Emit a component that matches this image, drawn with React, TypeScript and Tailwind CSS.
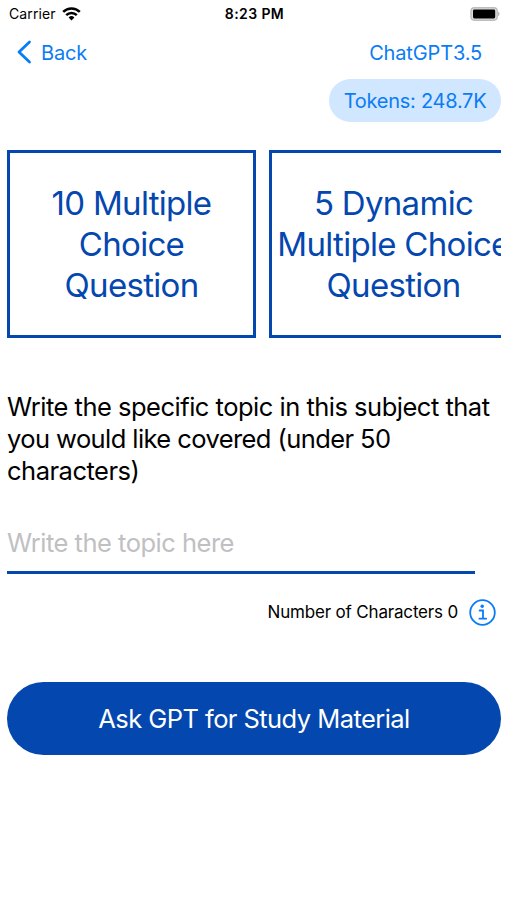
import React from 'react';

const StatusBar: React.FC = () => (
  <div className="grid h-[27px] grid-cols-3 items-center pl-[9px] pr-[7px]">
    <div className="flex items-center gap-1.5">
      <span className="text-[14px] tracking-[0.1px]">Carrier</span>
      <svg width="19" height="14" viewBox="0 0 19 14" fill="none" stroke="#000" strokeWidth="2.5">
        <path d="M1.2 4.9a11.7 11.7 0 0 1 16.6 0" />
        <path d="M4.2 8.2a7.5 7.5 0 0 1 10.6 0" />
        <path d="M9.5 13.4 6.6 10.5a4.1 4.1 0 0 1 5.8 0z" fill="#000" stroke="none" />
      </svg>
    </div>
    <span className="text-center text-[14px] font-semibold tracking-[0.4px]">8:23 PM</span>
    <svg className="justify-self-end" width="30" height="14" viewBox="0 0 30 14">
      <rect x="1" y="0.8" width="26.2" height="12.4" rx="3.4" fill="#ddd" stroke="#bdbdbd" strokeWidth="1.4" />
      <rect x="3" y="2.6" width="22.2" height="8.8" rx="1.4" fill="#000" />
      <path d="M28.2 4.6c1.8.8 1.8 3.8 0 4.6z" fill="#b0b0b0" />
    </svg>
  </div>
);

const NavBar: React.FC = () => (
  <div className="flex h-[50px] items-center justify-between pl-4 pr-[25px] text-[20px] tracking-[-0.2px] text-[#0a7cf5]">
    <button className="flex items-center gap-[9px]">
      <svg width="16" height="24" viewBox="0 0 16 24" fill="none" stroke="currentColor" strokeWidth="2.8" strokeLinecap="round" strokeLinejoin="round">
        <path d="M13.5 2 3 12l10.5 10" />
      </svg>
      <span className="pt-0.5">Back</span>
    </button>
    <span className="pt-0.5 tracking-[-0.15px]">ChatGPT3.5</span>
  </div>
);

const options = [
  ['10 Multiple', 'Choice', 'Question'],
  ['5 Dynamic', 'Multiple Choice', 'Question'],
];

const App: React.FC = () => {
  return (
    <div className="h-[900px] w-[507px] overflow-hidden bg-white font-['Inter',sans-serif] text-black">
      <StatusBar />
      <NavBar />
      <div className="flex justify-end pr-[6px] pt-0.5">
        <span className="flex h-[43px] w-[172px] items-center justify-center rounded-full bg-[#d1e6ff] text-[20px] tracking-[-0.25px] text-[#0a7cf5]">
          Tokens: 248.7K
        </span>
      </div>

      <div className="ml-[7px] mr-[6px] mt-7 flex gap-[13px] overflow-hidden">
        {options.map((lines) => (
          <div
            key={lines[0]}
            className="flex h-[188px] w-[249px] shrink-0 flex-col items-center justify-center border-[3px] border-[#0447ae] pt-px text-[33px] leading-[41px] tracking-[-0.7px] whitespace-nowrap text-[#0447ae]"
          >
            {lines.map((line) => (
              <span key={line}>{line}</span>
            ))}
          </div>
        ))}
      </div>

      <div className="ml-[7px] mr-[6px] mt-[53px]">
        <p className="text-[25.5px] leading-8 tracking-[-0.5px] whitespace-nowrap">
          Write the specific topic in this subject that
          <br />
          <span className="tracking-[-0.58px]">you would like covered (under 50</span>
          <br />
          characters)
        </p>
        <div className="mt-10 h-[47px] w-[468px] border-b-[3px] border-[#0447ae] text-[25.5px] leading-8 tracking-[-0.5px] text-[#c0c0c2]">
          Write the topic here
        </div>
        <div className="mt-[25px] flex items-center justify-end gap-[11px] pr-[5px]">
          <span className="text-[17px] tracking-[-0.18px]">Number of Characters 0</span>
          <svg width="27" height="27" viewBox="0 0 27 27" fill="none" stroke="#0a7cf5" strokeWidth="1.8">
            <circle cx="13.5" cy="13.5" r="12.3" />
            <circle cx="13.2" cy="7.3" r="1.7" fill="#0a7cf5" stroke="none" />
            <path d="M10.6 11.5h3.4v8M10.4 19.7h6.8" strokeLinecap="round" />
          </svg>
        </div>
        <button className="mt-[56px] flex h-[73px] w-full items-center justify-center rounded-full bg-[#0447ae] pt-px text-[25.5px] tracking-[-0.56px] text-white">
          Ask GPT for Study Material
        </button>
      </div>
    </div>
  );
};

export default App;
